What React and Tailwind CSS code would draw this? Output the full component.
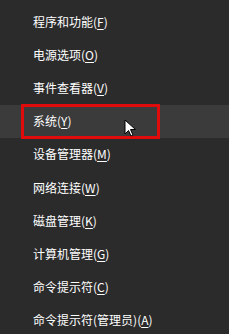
const items = [
  ['程序和功能', 'F'],
  ['电源选项', 'O'],
  ['事件查看器', 'V'],
  ['系统', 'Y'],
  ['设备管理器', 'M'],
  ['网络连接', 'W'],
  ['磁盘管理', 'K'],
  ['计算机管理', 'G'],
  ['命令提示符', 'C'],
  ['命令提示符(管理员)', 'A'],
];

const Cursor = () => (
  <svg width="13" height="19" viewBox="0 0 13 19" className="absolute left-[124px] top-[119px]">
    <path d="M1 1 L1 15 L4.5 11.5 L7 17 L9 16 L6.5 10.5 L11.5 10.5 Z" fill="#fff" stroke="#000" strokeWidth="1" strokeLinejoin="round" />
  </svg>
);

export default function App() {
  return (
    <div className="relative w-[229px] h-[334px] overflow-hidden bg-[#2b2b2b] pt-[5px] font-['Microsoft_YaHei','Noto_Sans_CJK_SC',sans-serif] text-[12px] text-white">
      {items.map(([label, key], idx) => (
        <div
          key={idx}
          className={`flex items-center h-[33.2px] pl-[33px] ${idx === 3 ? 'bg-[#3b3b3b]' : ''}`}
        >
          <span>
            {label}(<span className="underline underline-offset-2">{key}</span>)
          </span>
        </div>
      ))}
      {/* red annotation box */}
      <div className="absolute left-[21px] top-[104px] w-[139px] h-[35px] border-[3px] border-[#e00c0c]" />
      <Cursor />
    </div>
  );
}
